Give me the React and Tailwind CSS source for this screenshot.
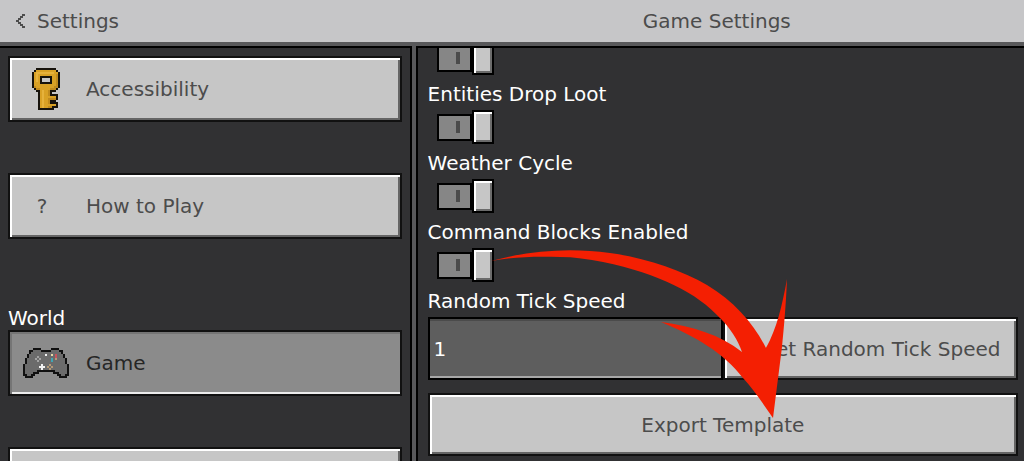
import { useState } from 'react'

const KEY_PIXELS = [
  '..KKKKKKKKKK..',
  '.KYYYYYYYYYYK.',
  'KYLLLLLLLLLYYK',
  'KYLYYYYYYYYYDK',
  'KYLYKKKKKKYYDK',
  'KYLYKWWWWKYYDK',
  'KYLYKWWWWKYYDK',
  'KYYYKKKKKKYYDK',
  'KYYYYYYYYYYYDK',
  'KDYYYYYYYYYDDK',
  '.KDDYYYYYDDDK.',
  '..KKYLYYDKKK..',
  '...KYLYYDK....',
  '...KYLYYDKKKK.',
  '...KYLYYYYYYK.',
  '...KYLYYDDDDK.',
  '...KYLYYDKKK..',
  '...KYLYYDKKKK.',
  '...KYLYYYYYYK.',
  '...KYLYYDDKKK.',
  '...KKKKKKKK...'
]

const GAMEPAD_PIXELS = [
  '.....KKKK.....KKKK.....',
  '...KKGGGGKKKKKGGGGKK...',
  '...KGGGGGGGGGGGGGGGK...',
  '..KGGGGGGGGWGGPGRGGGK..',
  '..KGGGGLGGGGGGGGRGGGK..',
  '.KGGGGLGLGGGGGCGOGGGGK.',
  '.KGGGGGLGGGGGGCGGGGGGK.',
  '.KGGGGGGGGGGGGGGGGGGGK.',
  'KGGGGGGGGWGGGOGGGGGGGGK',
  'KGGGGGGGWWWGOGOGGGGGGGK',
  'KGGGGGGGGWGGGOGGGGGGGGK',
  'KGGGGGGKKKKKKKKKGGGGGGK',
  'KGGGGKKK.......KKKGGGGK',
  'KKGGKK...........KKGGKK',
  '.KKKK.............KKKK.'
]

const KEY_COLORS = { K: '#17130c', Y: '#d9a125', L: '#e6b23c', D: '#c08a1e', W: '#c6c6c6' }
const GAMEPAD_COLORS = {
  K: '#101010',
  G: '#6b6b6b',
  L: '#a3a3a3',
  W: '#f2f2f2',
  P: '#e8d9a8',
  R: '#c9525c',
  C: '#3fa6b5',
  O: '#b39a78'
}

function PixelIcon({ rows, colors }) {
  const width = rows[0].length
  return (
    <svg
      width={width * 2}
      height={rows.length * 2}
      viewBox={`0 0 ${width} ${rows.length}`}
      shapeRendering="crispEdges"
      aria-hidden="true"
    >
      {rows.map((row, y) =>
        [...row].map((c, x) =>
          c === '.' ? null : (
            <rect key={`${x}-${y}`} x={x} y={y} width="1" height="1" fill={colors[c]} />
          )
        )
      )}
    </svg>
  )
}

const RAISED =
  'border-2 border-[#111111] bg-[#c6c6c6] shadow-[inset_2px_2px_0_#ffffff,inset_-2px_-2px_0_#656565] text-[#4c4c4c]'
const PRESSED =
  'border-2 border-[#111111] bg-[#8b8b8b] shadow-[inset_2px_2px_0_#757575,inset_0_-2px_0_#ececec] text-[#262626]'

function MenuItem({ icon, label, selected, onClick }) {
  return (
    <button
      onClick={onClick}
      className={`flex h-[66px] w-full shrink-0 items-center gap-3 px-2 text-left ${selected ? PRESSED : RAISED}`}
    >
      <span className="flex w-14 justify-center">{icon}</span>
      <span>{label}</span>
    </button>
  )
}

function Toggle({ id, label }) {
  const [on, setOn] = useState(true)

  return (
    <div className="relative h-[34px] pl-[9px]">
      <input
        id={id}
        type="checkbox"
        checked={on}
        onChange={(e) => setOn(e.target.checked)}
        aria-label={label}
        className="peer sr-only"
      />
      <label
        htmlFor={id}
        className="flex w-[57px] cursor-pointer items-center peer-focus-visible:outline-2 peer-focus-visible:outline-white"
      >
        {!on && <Knob />}
        <span className="flex h-[27px] flex-1 items-center justify-center border-2 border-black bg-[#868686] pl-2">
          <span className="h-3 w-1 bg-[#4b4b4b]" />
        </span>
        {on && <Knob />}
      </label>
    </div>
  )
}

function Knob() {
  return (
    <span className="h-[34px] w-[22px] border-2 border-black bg-[#c6c6c6] shadow-[inset_2px_2px_0_#ffffff,inset_-2px_-2px_0_#6b6b6b]" />
  )
}

function RowLabel({ htmlFor, children }) {
  return (
    <label htmlFor={htmlFor} className="flex h-[35px] items-center pt-0.5 text-white">
      {children}
    </label>
  )
}

const RULES = [
  { id: 'entities', label: 'Entities Drop Loot' },
  { id: 'weather', label: 'Weather Cycle' },
  { id: 'commands', label: 'Command Blocks Enabled' }
]

export default function App() {
  const [page, setPage] = useState('game')
  const [speed, setSpeed] = useState('1')

  return (
    <div className="flex h-screen flex-col overflow-hidden bg-[#313133] font-['DejaVu_Sans',sans-serif] text-[20px] leading-6 whitespace-nowrap">
      {/* Header */}
      <header className="flex h-[46px] shrink-0 items-center border-b-4 border-[#58585a] bg-[#c6c6c8] text-[#4c4c4c]">
        <div className="w-2/5 px-4">
          <button className="flex items-center gap-3">
            <svg width="9" height="14" viewBox="0 0 9 14" fill="currentColor" shapeRendering="crispEdges" aria-hidden="true">
              <path d="M6 0h3v2H6zM4 2h3v2H4zM2 4h3v2H2zM0 6h3v2H0zM2 8h3v2H2zM4 10h3v2H4zM6 12h3v2H6z" />
            </svg>
            Settings
          </button>
        </div>
        <h1 className="flex-1 text-center">Game Settings</h1>
      </header>

      <div className="flex min-h-0 flex-1">
        {/* Menu */}
        <nav className="flex w-[calc(40%+2px)] flex-col overflow-hidden border-t-2 border-r-2 border-black px-2 pt-2">
          <MenuItem
            icon={<PixelIcon rows={KEY_PIXELS} colors={KEY_COLORS} />}
            label="Accessibility"
            selected={page === 'accessibility'}
            onClick={() => setPage('accessibility')}
          />
          <div className="h-[51px] shrink-0" />
          <MenuItem
            icon={<span className="pr-2">?</span>}
            label="How to Play"
            selected={page === 'help'}
            onClick={() => setPage('help')}
          />
          <h2 className="flex h-[91px] shrink-0 items-end text-white">World</h2>
          <MenuItem
            icon={<PixelIcon rows={GAMEPAD_PIXELS} colors={GAMEPAD_COLORS} />}
            label="Game"
            selected={page === 'game'}
            onClick={() => setPage('game')}
          />
          <div className="h-[51px] shrink-0" />
          <MenuItem selected={page === 'account'} onClick={() => setPage('account')} />
        </nav>

        <div className="w-1 bg-[#58585a]" />

        {/* Settings list */}
        <main className="relative flex-1 overflow-hidden border-t-2 border-l-2 border-black pr-1.5 pl-2.5">
          <div className="-mt-[7px]">
            <Toggle id="mobs" label="Mob Loot" />
          </div>
          {RULES.map((rule) => (
            <div key={rule.id}>
              <RowLabel htmlFor={rule.id}>{rule.label}</RowLabel>
              <Toggle id={rule.id} label={rule.label} />
            </div>
          ))}

          <RowLabel htmlFor="speed">Random Tick Speed</RowLabel>
          <div className="flex h-[63px]">
            <input
              id="speed"
              value={speed}
              onChange={(e) => setSpeed(e.target.value)}
              className="w-1/2 border-2 border-black bg-[#5e5e5e] px-1 text-white shadow-[inset_0_2px_0_#4b4b4b,inset_0_-2px_0_#a8a8a8] outline-none"
            />
            <button onClick={() => setSpeed('1')} className={`w-1/2 ${RAISED}`}>
              Reset Random Tick Speed
            </button>
          </div>
          <button className={`mt-[13px] h-[63px] w-full ${RAISED}`}>Export Template</button>

          {/* Arrow from the command block switch to the export button */}
          <svg
            className="pointer-events-none absolute top-[198px] left-[72px]"
            width="300"
            height="174"
            viewBox="490 246 300 174"
            fill="#f41f02"
            aria-hidden="true"
          >
            <path d="M491 261 C528 251 568 247 610 253 C646 258 681 270 707 285 C735 302 754 324 766 348 C777 328 782 306 787 279 C786 304 784 327 782 347 L773 418 C762 402 753 389 743 378 C724 353 695 336 661 322 C692 326 721 335 742 352 C738 340 730 328 720 318 C697 293 660 274 603 262 C588 259 574 257 560 257 C535 256 513 257 491 261 Z" />
          </svg>
        </main>
      </div>
    </div>
  )
}
